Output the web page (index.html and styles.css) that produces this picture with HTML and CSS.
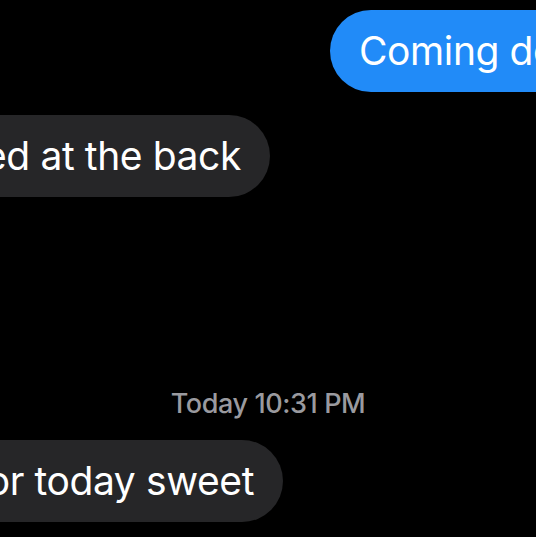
FILE: index.html
```html
<!DOCTYPE html>
<html>
<head>
<meta charset="utf-8">
<link rel="stylesheet" href="styles.css">
</head>
<body>
<main class="thread">
  <div class="row row-out">
    <div class="bubble bubble-out">Coming down</div>
  </div>
  <div class="row row-in row-in-1">
    <div class="bubble bubble-in">I'm parked at the back</div>
  </div>
  <div class="stamp">Today 10:31 PM</div>
  <div class="row row-in row-in-2">
    <div class="bubble bubble-in">Thanks for today sweet</div>
  </div>
</main>
</body>
</html>
```

FILE: styles.css
```css
html, body {
  margin: 0;
  padding: 0;
  background: #000;
  overflow: hidden;
  width: 536px;
  height: 537px;
}
.thread {
  display: flex;
  flex-direction: column;
  font-family: Inter, "Noto Sans", sans-serif;
  padding-top: 10px;
}
.row {
  display: flex;
  white-space: nowrap;
}
.row-out {
  padding-left: 330px;
}
.row-in-1 {
  width: 270px;
  justify-content: flex-end;
  margin-top: 23px;
}
.row-in-2 {
  width: 283px;
  justify-content: flex-end;
  margin-top: 19px;
}
.bubble {
  flex: none;
  font-size: 39px;
  line-height: 50px;
  padding: 16px 29px;
  border-radius: 41px;
  color: #fff;
  letter-spacing: -0.4px;
}
.bubble-out {
  background: #218bf8;
}
.bubble-in {
  background: #262628;
}
.stamp {
  margin-top: 190px;
  text-align: center;
  color: #9a9a9f;
  font-size: 27px;
  line-height: 34px;
  font-weight: 500;
  letter-spacing: -0.4px;
}
```
